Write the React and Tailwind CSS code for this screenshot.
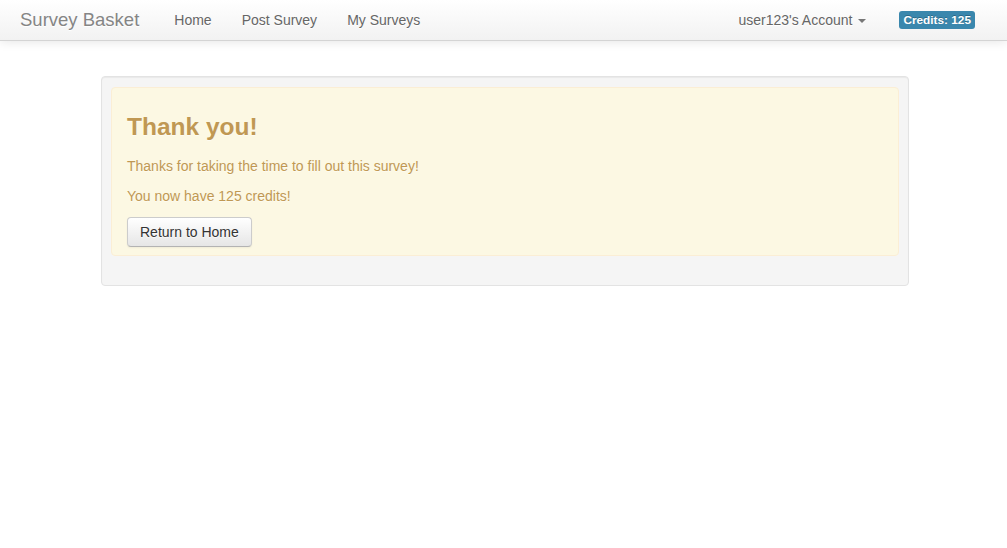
import React from 'react';

const navLinks = ['Home', 'Post Survey', 'My Surveys'];

function Navbar() {
  return (
    <div className="h-[41px] border-b border-[#d4d4d4] bg-gradient-to-b from-white to-[#f2f2f2] shadow-[0_1px_10px_rgba(0,0,0,0.1)] flex items-center">
      <a className="pl-[20px] pr-[20px] text-[18.5px] leading-[20px] text-[#858585] [text-shadow:0_1px_0_#fff]">
        Survey Basket
      </a>
      <ul className="flex">
        {navLinks.map((link) => (
          <li key={link}>
            <a className="block px-[15px] py-[10px] text-[14px] leading-[20px] text-[#666] [text-shadow:0_1px_0_#fff]">
              {link}
            </a>
          </li>
        ))}
      </ul>
      <div className="ml-auto flex items-center pr-[32px]">
        <a className="flex items-center px-[15px] py-[10px] text-[14px] leading-[20px] text-[#666] [text-shadow:0_1px_0_#fff]">
          user123's Account
          <span className="ml-[6px] mt-[1px] inline-block w-0 h-0 border-t-[4px] border-t-[#777] border-x-[4px] border-x-transparent" />
        </a>
        <span className="ml-[18px] rounded-[3px] bg-[#3a87ad] px-[4px] py-[2px] text-[11.8px] leading-[14px] font-bold text-white [text-shadow:0_-1px_0_rgba(0,0,0,0.25)]">
          Credits: 125
        </span>
      </div>
    </div>
  );
}

export default function App() {
  return (
    <div className="min-h-[548px] bg-white font-['Liberation_Sans',Arial,sans-serif] text-[14px] leading-[20px] text-[#333]">
      <Navbar />
      <div className="ml-[101px] mt-[35px] w-[808px] rounded-[4px] border border-[#e3e3e3] bg-[#f5f5f5] p-[9px] shadow-[inset_0_1px_1px_rgba(0,0,0,0.05)]">
        <div className="mt-px mb-[20px] rounded-[4px] border border-[#fbeed5] bg-[#fcf8e3] pl-[14px] pr-[35px] pt-[8px] pb-[8px] text-[#c09853] [text-shadow:0_1px_0_rgba(255,255,255,0.5)]">
          <h3 className="ml-px mt-[11px] mb-[9px] text-[24.5px] leading-[40px] font-bold">Thank you!</h3>
          <p className="ml-px mb-[10px]">Thanks for taking the time to fill out this survey!</p>
          <p className="ml-px mb-[11px]">You now have 125 credits!</p>
          <button className="ml-px h-[30px] rounded-[4px] border border-[#ccc] border-b-[#b3b3b3] bg-gradient-to-b from-white to-[#e6e6e6] px-[12px] text-[14px] leading-[20px] text-[#333] shadow-[inset_0_1px_0_rgba(255,255,255,0.2),0_1px_2px_rgba(0,0,0,0.05)] [text-shadow:0_1px_1px_rgba(255,255,255,0.75)]">
            Return to Home
          </button>
        </div>
      </div>
    </div>
  );
}
